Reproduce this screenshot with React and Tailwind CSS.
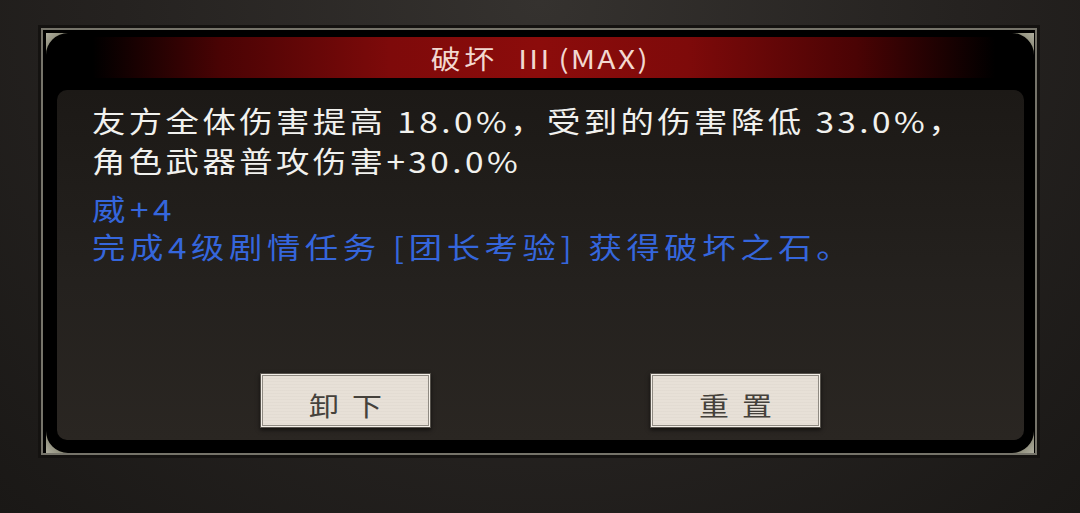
const FONT = { fontFamily: '"Noto Sans CJK SC", "Noto Sans", sans-serif' };

function Corner({ className }) {
  return (
    <svg width="22" height="22" viewBox="0 0 22 22" className={`absolute z-20 ${className}`}>
      <defs>
        <linearGradient id="cg" x1="0" y1="0" x2="1" y2="1">
          <stop offset="0" stopColor="#b0af9f" />
          <stop offset="0.5" stopColor="#83826f" />
          <stop offset="1" stopColor="#4a4940" />
        </linearGradient>
      </defs>
      <path d="M0 0 H22 A22 22 0 0 0 0 22 Z" fill="url(#cg)" />
    </svg>
  );
}

function GameButton({ a, b }) {
  return (
    <button className="w-[171px] h-[55px] border border-[#55514b] p-[1px] bg-[#f3eee7] shadow-[0_2px_4px_rgba(0,0,0,0.6)]">
      <div className="w-full h-full border border-[#8f8a82] bg-[repeating-linear-gradient(to_bottom,#e7e0d7_0px,#e7e0d7_2px,#ded7ce_3px)] flex items-center justify-center gap-[16px] pt-[8px] text-[#45413b] text-[26px] leading-none">
        <span className="inline-block scale-x-[1.15]">{a}</span>
        <span className="inline-block scale-x-[1.15]">{b}</span>
      </div>
    </button>
  );
}

export default function App() {
  return (
    <div
      className="w-[1080px] h-[513px] overflow-hidden bg-[radial-gradient(ellipse_at_50%_0%,#35322f_0%,#252220_55%,#1a1816_100%)] pt-[25px] pl-[38px]"
      style={FONT}
    >
      {/* ── marco exterior ── */}
      <div className="w-[1002px] h-[433px] border-[3px] border-[#141210]">
        <div className="relative w-full h-full border-2 border-[#76746a] bg-black pt-[7px] pb-[13px] pl-[14px] pr-[11px] flex flex-col">
          <Corner className="left-[3px] top-[3px]" />
          <Corner className="right-[1px] top-[3px] rotate-90" />
          <Corner className="left-[3px] bottom-[0px] -rotate-90" />
          <Corner className="right-[1px] bottom-[0px] rotate-180" />

          {/* ── barra de título ── */}
          <div className="-ml-[14px] -mr-[11px] h-[41px] shrink-0 bg-[linear-gradient(to_right,#000_5%,#4a0304_18%,#7e0a0a_35%,#8c0c0b_50%,#7e0a0a_65%,#4a0304_82%,#000_96%)] flex items-center justify-center">
            <div className="scale-x-[1.15] text-[26px] leading-none text-[#f2d8d0] whitespace-nowrap flex items-baseline pl-[2px]">
              <span className="tracking-[3px]">破坏</span>
              <span className="ml-[18px] tracking-[2px]">III</span>
              <span className="ml-[6px] tracking-[2px]">(MAX)</span>
            </div>
          </div>

          {/* ── panel de contenido ── */}
          <div className="relative z-10 mt-[12px] flex-1 rounded-[10px] bg-[linear-gradient(to_bottom,#1c1916,#24211e_55%,#2a2622)] flex flex-col pl-[35px] pt-[10px] pb-[12px]">
            <div className="origin-left scale-x-[1.15] text-[29px] tracking-[3px] text-[#f1f1ee] leading-[40px] whitespace-nowrap">
              <div>友方全体伤害提高 18.0%，受到的伤害降低 33.0%，</div>
              <div>角色武器普攻伤害+30.0%</div>
            </div>
            <div className="mt-[9px] origin-left scale-x-[1.15] text-[29px] tracking-[4px] text-[#3566dc] leading-[38px] whitespace-nowrap">
              <div>威+4</div>
              <div>完成4级剧情任务 [团长考验] 获得破坏之石。</div>
            </div>

            <div className="mt-auto -ml-[35px] flex justify-center gap-[219px]">
              <GameButton a="卸" b="下" />
              <GameButton a="重" b="置" />
            </div>
          </div>
        </div>
      </div>
    </div>
  );
}
